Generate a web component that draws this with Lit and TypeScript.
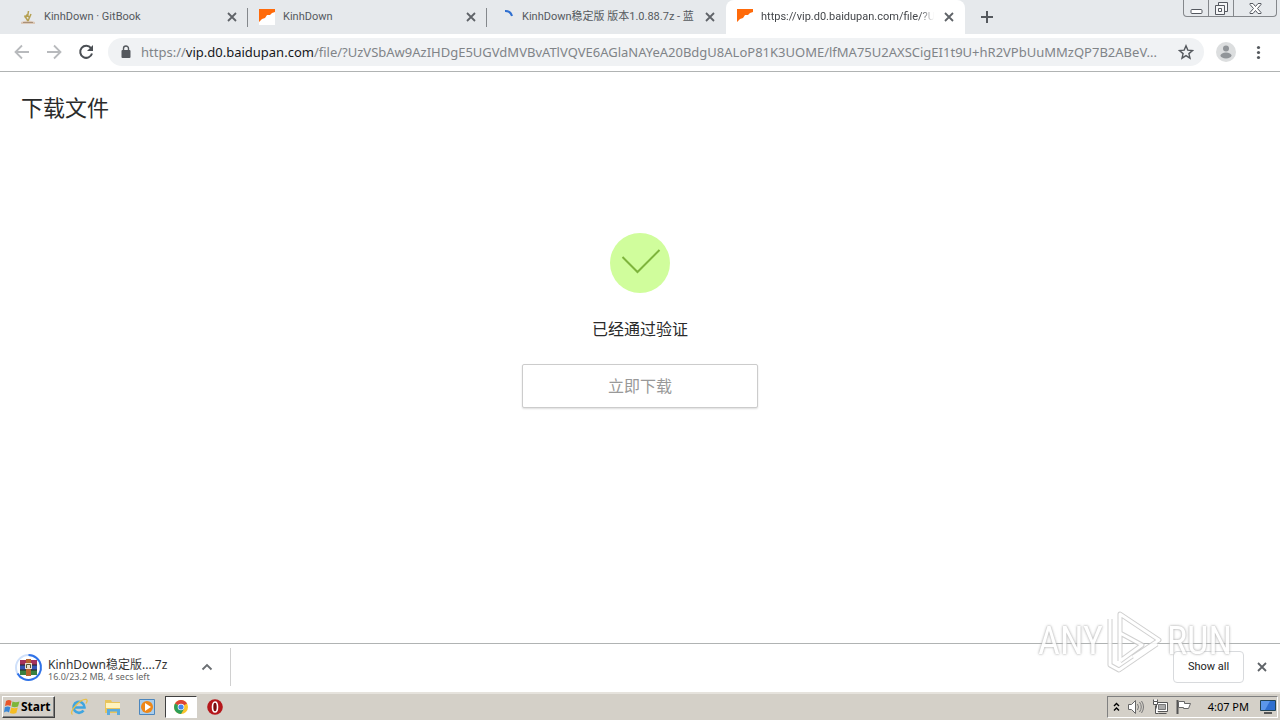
import { LitElement, html, css } from "lit";
import { customElement, property } from "lit/decorators.js";

const closeIcon = html`<svg width="10" height="10" viewBox="0 0 10 10"><path d="M1 1l8 8M9 1l-8 8" stroke="#5f6368" stroke-width="1.8" /></svg>`;

const favicons: Record<string, unknown> = {
  book: html`<svg width="16" height="16" viewBox="0 0 16 16"><path d="M1 13q7-3 14 0v2H1z" fill="#dcc9b8" /><path d="M3 13.500h10" stroke="#a89078" /><path d="M8 12L4.500 6.500M8 12l3-7M7.500 8l1-6M5 9l2-3 3 3" stroke="#b5a052" stroke-width="1.5" fill="none" /></svg>`,
  cloud: html`<svg width="16" height="16" viewBox="0 0 16 16"><path d="M0 0h16v16H0z" fill="#fff" /><path d="M0 0h16v3l-3 1-2 2-3 0-2 3-3 1-3 3z" fill="#ff6a0a" /></svg>`,
  spinner: html`<svg width="16" height="16" viewBox="0 0 16 16"><path d="M7 2a7 7 0 0 1 7 5" fill="none" stroke="#2f6fd0" stroke-width="2" /></svg>`,
};

@customElement("browser-tab")
export class BrowserTab extends LitElement {
  @property() label = "";
  @property() icon = "cloud";
  @property({ type: Boolean, reflect: true }) active = false;
  @property({ type: Boolean, reflect: true }) divided = false;

  static styles = css`
    :host { flex: 1 1 0; min-width: 0; max-width: 239px; display: flex; align-items: center; gap: 8px; padding: 0 9px 0 11px; box-sizing: border-box; position: relative; color: #55595e; }
    :host([divided])::after { content: ""; position: absolute; right: 0; top: 8px; width: 1px; height: 19px; background: #84888c; }
    :host([active]) { background: #fff; border-radius: 8px 8px 0 0; color: #44474b; }
    svg { display: block; flex: none; }
    .label { flex: 1; min-width: 0; font-size: 11px; line-height: 16px; white-space: nowrap; overflow: hidden; }
    :host([active]) .label { mask-image: linear-gradient(to right, #000 92%, transparent); }
    button { flex: none; border: 0; padding: 2px; background: none; }
  `;

  render() {
    return html`${favicons[this.icon]}<span class="label">${this.label}</span><button aria-label="Close tab">${closeIcon}</button>`;
  }
}

@customElement("app-root")
export class AppRoot extends LitElement {
  static styles = css`
    :host { display: flex; flex-direction: column; height: 100vh; overflow: hidden; position: relative; background: #fff; color: #222; font: 11px/16px "Noto Sans", "Noto Sans CJK SC", sans-serif; }
    * { box-sizing: border-box; }
    svg { display: block; flex: none; }
    button { font: inherit; color: inherit; border: 0; padding: 0; background: none; }

    .tabs { display: flex; height: 34px; flex: none; background: #e6e9ec; padding-left: 9px; position: relative; font-family: Roboto, "Noto Sans CJK SC", sans-serif; }
    .new { margin-left: 16px; }
    .window { position: absolute; right: 3px; top: 0; display: flex; height: 17px; border: 1px solid #84878b; border-top: 0; border-radius: 0 0 4px 4px; }
    .window button { width: 25px; display: grid; place-items: center; border-right: 1px solid #84878b; }
    .window button:last-child { width: 42px; border: 0; }

    .toolbar { display: flex; align-items: center; height: 38px; flex: none; padding: 0 12px 2px; gap: 12px; border-bottom: 1px solid #b0b3b3; }
    .nav { display: flex; gap: 12px; }
    .address { flex: 1; min-width: 0; display: flex; align-items: center; gap: 7px; height: 28px; border-radius: 14px; background: #f0f2f4; padding: 0 10px; font-size: 13px; color: #808488; }
    .url { flex: 1; min-width: 0; white-space: nowrap; overflow: hidden; text-overflow: ellipsis; line-height: 20px; }
    .host { color: #16181b; }
    .right { display: flex; align-items: center; gap: 12px; }

    main { flex: 1; min-height: 0; color: #2b2b2b; }
    h1 { margin: 0; padding: 19px 21px 0; font-size: 22px; line-height: 32px; font-weight: 400; }
    .verified { display: flex; flex-direction: column; align-items: center; padding-top: 110px; font-size: 16px; line-height: 24px; }
    .verified p { margin: 24px 0 23px; }
    .verified button { width: 236px; height: 44px; background: #fff; border: 1px solid #ccc; border-radius: 2px; box-shadow: 0 1px 2px #0002; color: #999; }

    .downloads { display: flex; align-items: center; flex: none; height: 49px; border-top: 1px solid #b0b3b3; padding: 0 13px 2px 14px; }
    .item { display: flex; align-items: center; width: 217px; height: 38px; border-right: 1px solid #d0d0d0; }
    .file { flex: 1; margin-left: 5px; padding-top: 6px; }
    .name { font-size: 12px; line-height: 14px; color: #333; }
    .size { font-size: 9px; line-height: 10px; color: #666; }
    .more { margin-right: 17px; }
    .all { margin-left: auto; margin-right: 13px; width: 71px; height: 32px; border: 1px solid #d8dadd; border-radius: 4px; color: #222; font-family: Roboto, sans-serif; }

    .taskbar { display: flex; align-items: center; flex: none; height: 28px; background: #d4d0c8; padding: 0 2px; border-top: 2px solid #e6e3dd; }
    .start { display: flex; align-items: center; gap: 1px; width: 53px; height: 22px; padding-left: 1px; font-weight: 700; font-size: 12px; color: #000; border: 1px solid; border-color: #fff #404040 #404040 #fff; box-shadow: inset -1px -1px #808080; }
    .apps { display: flex; align-items: center; gap: 2px; margin-left: 8px; }
    .apps button { width: 32px; height: 22px; display: grid; place-items: center; }
    .apps .current { background: #fff; border: 1px solid; border-color: #404040 #fff #fff #404040; }
    .tray { display: flex; align-items: center; gap: 8px; height: 22px; margin-left: auto; padding: 0 1px 0 5px; color: #000; border: 1px solid; border-color: #808080 #fff #fff #808080; }
    .tray time { margin: 0 3px 0 8px; }

    .mark { position: absolute; right: 48px; bottom: 47px; display: flex; align-items: center; gap: 4px; pointer-events: none; opacity: 0.85; font: 38px/64px "Roboto Condensed", Roboto, sans-serif; color: #fff; }
    .mark span { text-shadow: 0 0 3px #aaa, 0 0 2px #bbb; }
  `;

  render() {
    return html`
      <header class="tabs">
        <browser-tab label="KinhDown · GitBook" icon="book" divided></browser-tab>
        <browser-tab label="KinhDown" divided></browser-tab>
        <browser-tab label="KinhDown稳定版 版本1.0.88.7z - 蓝" icon="spinner"></browser-tab>
        <browser-tab label="https://vip.d0.baidupan.com/file/?Uz" active></browser-tab>
        <button class="new" aria-label="New tab"><svg width="12" height="12" viewBox="0 0 12 12"><path d="M6 0v12M0 6h12" stroke="#55595e" stroke-width="2" /></svg></button>
        <div class="window">
          <button aria-label="Minimize"><svg width="13" height="13" viewBox="0 0 13 13"><rect x="1" y="7.500" width="11" height="4" rx="1" fill="#fff" stroke="#555960" /></svg></button>
          <button aria-label="Restore"><svg width="13" height="13" viewBox="0 0 13 13"><path d="M3.500.5h9v9h-9z" fill="#f5f6f7" stroke="#555960" /><path d="M.5 3.500h9v9h-9z" fill="#f5f6f7" stroke="#555960" /><path d="M3.500 6.500h3v3h-3z" fill="#fff" stroke="#555960" /></svg></button>
          <button aria-label="Close"><svg width="13" height="11" viewBox="0 0 13 11"><path d="M1 .5h3l2.500 3 2.500-3h3v1L8.500 5.500 12 9.500v1H9l-2.500-3-2.500 3H1v-1l3.500-4L1 1.500z" fill="#fff" stroke="#555960" /></svg></button>
        </div>
      </header>
      <nav class="toolbar">
        <div class="nav">
          <button aria-label="Back"><svg width="20" height="20" viewBox="0 0 20 20"><path d="M17 10H4M10 3.500L3.500 10l6.500 6.500" fill="none" stroke="#b8babd" stroke-width="1.800" /></svg></button>
          <button aria-label="Forward"><svg width="20" height="20" viewBox="0 0 20 20"><path d="M3 10h13M10 3.500l6.500 6.500-6.500 6.500" fill="none" stroke="#b8babd" stroke-width="1.800" /></svg></button>
          <button aria-label="Reload"><svg width="20" height="20" viewBox="0 0 20 20"><path d="M15 6.200A6 6 0 1 0 16 11.500" fill="none" stroke="#4b4f54" stroke-width="2" /><path d="M17 3v6h-6z" fill="#4b4f54" /></svg></button>
        </div>
        <div class="address">
          <svg width="16" height="16" viewBox="0 0 16 16"><rect x="3.500" y="6" width="9" height="8" rx="1" fill="#55595e" /><path d="M5.500 6.500V4.500a2.500 2.500 0 0 1 5 0v2" fill="none" stroke="#55595e" stroke-width="1.400" /></svg>
          <span class="url">https://<span class="host">vip.d0.baidupan.com</span>/file/?UzVSbAw9AzIHDgE5UGVdMVBvATlVQVE6AGlaNAYeA20BdgU8ALoP81K3UOME/lfMA75U2AXSCigEI1t9U+hR2VPbUuMMzQP7B2ABeV...</span>
          <button aria-label="Bookmark"><svg width="16" height="16" viewBox="0 0 16 16"><path d="M8 1.800l1.800 4.300 4.700.4-3.600 3.100 1.100 4.600L8 11.700l-4 2.500 1.100-4.600L1.500 6.500l4.700-.4z" fill="none" stroke="#55595e" stroke-width="1.400" /></svg></button>
        </div>
        <div class="right">
          <button aria-label="Profile"><svg width="20" height="20" viewBox="0 0 20 20"><circle cx="10" cy="10" r="10" fill="#dcdedf" /><circle cx="10" cy="6.500" r="3" fill="#919599" /><ellipse cx="10" cy="13.500" rx="5.500" ry="3" fill="#919599" /></svg></button>
          <button aria-label="Menu"><svg width="20" height="20" viewBox="0 0 20 20"><g fill="#55595e"><circle cx="10.500" cy="5.500" r="1.600" /><circle cx="10.500" cy="10.500" r="1.600" /><circle cx="10.500" cy="15.500" r="1.600" /></g></svg></button>
        </div>
      </nav>
      <main>
        <h1>下载文件</h1>
        <section class="verified">
          <svg width="60" height="60" viewBox="0 0 60 60"><circle cx="30" cy="30" r="30" fill="#d0fd9c" /><path d="M12.500 24l15 15L49.500 17" fill="none" stroke="#7eb43c" stroke-width="2" /></svg>
          <p>已经通过验证</p>
          <button>立即下载</button>
        </section>
      </main>
      <section class="downloads">
        <div class="item">
          <svg width="29" height="29" viewBox="0 0 29 29"><circle cx="14.500" cy="14.500" r="12.500" fill="#fff" stroke="#cfe0fa" stroke-width="2" /><path d="M14.500 2a12.500 12.500 0 1 1-11 18.500" fill="none" stroke="#2f72e8" stroke-width="2" /><path d="M6 7h17v5H6z" fill="#a3305c" /><path d="M6 12h17v5H6z" fill="#3553b4" /><path d="M6 17h17v5H6z" fill="#3a8040" /><path d="M6 12h17M6 17h17" stroke="#222" /><path d="M12 6h5v17h-5z" fill="#b8622e" /><path d="M11 10h7v6h-7z" fill="#e7ddd0" /><path d="M12.500 15v-3.500h4V15" fill="none" stroke="#553" /></svg>
          <div class="file"><div class="name">KinhDown稳定版....7z</div><div class="size">16.0/23.2 MB, 4 secs left</div></div>
          <button class="more" aria-label="Download options"><svg width="12" height="8" viewBox="0 0 12 8"><path d="M1.500 6.500L6 2l4.500 4.500" fill="none" stroke="#6a6e72" stroke-width="1.800" /></svg></button>
        </div>
        <button class="all">Show all</button>
        <button aria-label="Close downloads">${closeIcon}</button>
      </section>
      <footer class="taskbar">
        <button class="start"><svg width="16" height="16" viewBox="0 0 16 16"><path d="M2 2q3-2 5.500 0L6.500 7Q4 5.500 1 7z" fill="#e8562a" /><path d="M8.500 2.500q3 1.500 7 0L14 7.500q-3.500 1.500-6.500 0z" fill="#7db63a" /><path d="M.8 8.200q3-1.500 5.500 0L5 13.500q-2.500-2-5 0z" fill="#3a87d6" /><path d="M7.300 8.500q3 1.500 6.500 0l-1.500 5.500q-3 1.500-6.500 0z" fill="#f6bd22" /></svg>Start</button>
        <div class="apps">
          <button aria-label="Internet Explorer"><svg width="18" height="18" viewBox="0 0 18 18"><path d="M13.500 12.500A5.500 5.500 0 1 1 14.500 9.500H5" fill="none" stroke="#3fa5e0" stroke-width="2.600" /><path d="M2.500 16.500C-2 14 11 0 16.500 1.500q1.500 1-.5 4" fill="none" stroke="#e8c04a" stroke-width="1.300" /></svg></button>
          <button aria-label="Explorer"><svg width="18" height="18" viewBox="0 0 18 18"><path d="M1 2h6l1 2h8v11H1z" fill="#e8c45c" /><path d="M2 5h14v5H2z" fill="#fff3bd" /><path d="M3 17v-6h13v6h-3v-3.500H6V17z" fill="#5aabdf" /></svg></button>
          <button aria-label="Media Player"><svg width="18" height="18" viewBox="0 0 18 18"><path d="M1.500 1.500h15v15h-15z" fill="#a9cdec" stroke="#4c86bd" /><circle cx="9" cy="9" r="6" fill="#ee8718" /><path d="M7 5l6 4-6 4z" fill="#fff" /></svg></button>
          <button class="current" aria-label="Chrome"><svg width="14" height="14" viewBox="0 0 14 14"><circle cx="7" cy="7" r="7" fill="#fac42c" /><path d="M7 7L1 3.500A7 7 0 0 1 13 3.500z" fill="#dc4437" /><path d="M7 7L1 3.500A7 7 0 0 0 7 14l3-5z" fill="#2d9e58" /><circle cx="7" cy="7" r="3.300" fill="#fff" /><circle cx="7" cy="7" r="2.600" fill="#4586ee" /></svg></button>
          <button aria-label="Opera"><svg width="16" height="16" viewBox="0 0 16 16"><circle cx="8" cy="8" r="7.800" fill="#b5171b" /><ellipse cx="8" cy="8" rx="2.500" ry="5" fill="#7a0c0e" stroke="#fff" stroke-width="1.600" /></svg></button>
        </div>
        <div class="tray">
          <svg width="7" height="10" viewBox="0 0 7 10"><path d="M1 4l2.500-2.500L6 4M1 8.500L3.500 6 6 8.500" fill="none" stroke="#000" stroke-width="1.400" /></svg>
          <svg width="16" height="16" viewBox="0 0 16 16"><path d="M.5 5.500h3l4-4v13l-4-4h-3z" fill="#fff" stroke="#666" /><path d="M9.500 5q2 3 0 6M11.500 3q3.500 5 0 10M13.500 2q4 6 0 12" fill="none" stroke="#777" /></svg>
          <svg width="16" height="16" viewBox="0 0 16 16"><path d="M4.500 3.500h11v9h-11z" fill="#fff" stroke="#555" /><path d="M6.500 5.500h7v5h-7z" fill="#aaa" stroke="#777" /><path d="M6.500 14.500h8M3.500 6.500v8h3M1.500.5v2h4v-2M1.500 2.500v3h4v-3" fill="#fff" stroke="#555" /></svg>
          <svg width="16" height="16" viewBox="0 0 16 16"><path d="M1.500 1v14" stroke="#555" stroke-width="2" /><path d="M2.500 2.500h6v2h6l-2 5h-5v-1h-5z" fill="#fff" stroke="#666" /></svg>
          <time>4:07 PM</time>
          <svg width="16" height="14" viewBox="0 0 16 14"><path d="M.5.5h15v10H.5z" fill="#2f6fd0" stroke="#245" /><path d="M1 1h9L5 10H1z" fill="#5b97ea" /><path d="M4 12h8v2H4z" fill="#555" /></svg>
        </div>
      </footer>
      <div class="mark"><span>ANY</span><svg width="56" height="64" viewBox="0 0 56 64"><g fill="none" stroke-linejoin="round"><path d="M3 10v46l9 5 38-26M13 24V5l39 26-26 17M13 52V24l22 12-22 16" stroke="#c8c8c8" stroke-width="5" /><path d="M3 10v46l9 5 38-26M13 24V5l39 26-26 17M13 52V24l22 12-22 16" stroke="#fff" stroke-width="3" /></g></svg><span>RUN</span></div>
    `;
  }
}
